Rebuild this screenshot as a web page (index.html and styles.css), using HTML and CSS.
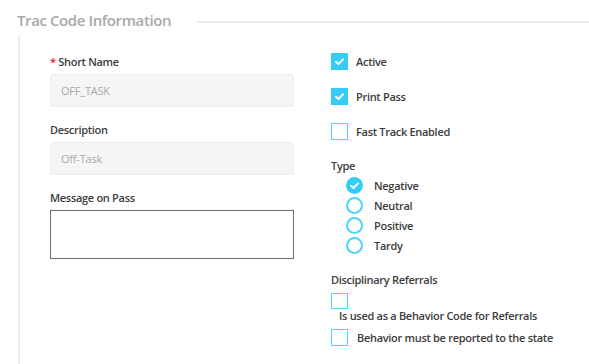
FILE: index.html
```html
<!DOCTYPE html>
<html lang="en">
<head>
  <meta charset="UTF-8" />
  <title>Trac Code Information</title>
  <link rel="stylesheet" href="styles.css">
</head>
<body>

  <div class="section-head">
    <div class="section-title">Trac Code Information</div>
    <div class="section-line"></div>
  </div>

  <div class="section-body">
    <div class="col-left">
      <div class="field">
        <div class="field-label"><span class="req">*</span> Short Name</div>
        <div class="field-input">OFF_TASK</div>
      </div>
      <div class="field">
        <div class="field-label">Description</div>
        <div class="field-input">Off-Task</div>
      </div>
      <div class="field">
        <div class="field-label">Message on Pass</div>
        <div class="field-textarea"></div>
      </div>
    </div>

    <div class="col-right">
      <div class="check-row">
        <svg class="box" viewBox="0 0 17 17" width="17" height="17"><rect width="17" height="17" fill="#35cdf6"/><path d="M5 8.8l2.4 2.2 4.6-4.6" fill="none" stroke="#fff" stroke-width="2" stroke-linecap="round" stroke-linejoin="round"/></svg>
        <span class="check-label">Active</span>
      </div>
      <div class="check-row">
        <svg class="box" viewBox="0 0 17 17" width="17" height="17"><rect width="17" height="17" fill="#35cdf6"/><path d="M5 8.8l2.4 2.2 4.6-4.6" fill="none" stroke="#fff" stroke-width="2" stroke-linecap="round" stroke-linejoin="round"/></svg>
        <span class="check-label">Print Pass</span>
      </div>
      <div class="check-row">
        <svg class="box" viewBox="0 0 17 17" width="17" height="17"><rect x="0.5" y="0.5" width="16" height="16" fill="#fff" stroke="#52d3f8"/></svg>
        <span class="check-label">Fast Track Enabled</span>
      </div>

      <div class="group-label type-label">Type</div>
      <div class="radio-list">
        <div class="radio-row">
          <span class="radio checked"><svg viewBox="0 0 17 17" width="17" height="17"><path d="M5 8.8l2.4 2.2 4.6-4.6" fill="none" stroke="#fff" stroke-width="2" stroke-linecap="round" stroke-linejoin="round"/></svg></span>
          <span class="check-label">Negative</span>
        </div>
        <div class="radio-row">
          <span class="radio"></span>
          <span class="check-label">Neutral</span>
        </div>
        <div class="radio-row">
          <span class="radio"></span>
          <span class="check-label">Positive</span>
        </div>
        <div class="radio-row">
          <span class="radio"></span>
          <span class="check-label">Tardy</span>
        </div>
      </div>

      <div class="group-label ref-label">Disciplinary Referrals</div>
      <svg class="box ref-box" viewBox="0 0 17 16" width="17" height="16"><rect x="0.5" y="0.5" width="16" height="15" fill="#fff" stroke="#52d3f8"/></svg>
      <div class="check-label ref-text">Is used as a Behavior Code for Referrals</div>
      <div class="check-row state-row">
        <svg class="box" viewBox="0 0 17 17" width="17" height="17"><rect x="0.5" y="0.5" width="16" height="16" fill="#fff" stroke="#52d3f8"/></svg>
        <span class="check-label">Behavior must be reported to the state</span>
      </div>
    </div>
  </div>

</body>
</html>
```

FILE: styles.css
```css
body {
  margin: 0;
  background: #fff;
  font-family: 'Open Sans', 'Liberation Sans', sans-serif;
  color: #3c3c3c;
  width: 589px;
  height: 364px;
  overflow: hidden;
}

.section-head {
  display: flex;
  align-items: flex-start;
  height: 35px;
  padding-left: 17px;
  box-sizing: border-box;
}

.section-title {
  font-size: 15px;
  font-weight: 600;
  color: #a8a8a8;
  letter-spacing: -0.4px;
  line-height: 20px;
  margin-top: 10px;
}

.section-line {
  flex: 1;
  height: 2px;
  background: #ececec;
  margin-left: 26px;
  margin-top: 21px;
}

.section-body {
  margin-left: 18px;
  border-left: 2px solid #eeeeee;
  height: 329px;
  display: flex;
  padding-left: 30px;
  padding-top: 18px;
  box-sizing: border-box;
}

.col-left {
  width: 244px;
  padding-top: 2px;
}

.col-right {
  margin-left: 37px;
  display: flex;
  flex-direction: column;
  align-items: flex-start;
}

.field {
  margin-bottom: 16px;
}

.field-label,
.group-label,
.check-label {
  font-size: 11px;
  font-weight: 600;
  line-height: 14px;
  letter-spacing: -0.3px;
  color: #3c3c3c;
}

.field-label {
  margin-bottom: 5px;
}

.req {
  color: #e02020;
}

.field-input {
  height: 33px;
  box-sizing: border-box;
  background: #f5f5f5;
  border: 1px solid #ececec;
  border-radius: 3px;
  padding: 0 10px;
  font-size: 11px;
  line-height: 31px;
  color: #a9a9a9;
  letter-spacing: -0.2px;
}

.field-textarea {
  height: 49px;
  box-sizing: border-box;
  border: 1px solid #6e6e6e;
  background: #fff;
}

.check-row {
  display: flex;
  align-items: flex-start;
  gap: 8px;
  height: 17px;
  margin-bottom: 18px;
}

.check-row .check-label {
  margin-top: 2px;
}

.box {
  display: block;
  flex-shrink: 0;
}

.type-label {
  margin-top: 1px;
}

.radio-list {
  margin-top: 4px;
  margin-left: 15px;
  display: flex;
  flex-direction: column;
  gap: 3px;
}

.radio-row {
  display: flex;
  align-items: center;
  gap: 11px;
  height: 17px;
}

.radio {
  width: 17px;
  height: 17px;
  box-sizing: border-box;
  border: 2px solid #4ed4f8;
  border-radius: 50%;
  display: block;
  flex-shrink: 0;
}

.radio.checked {
  background: #35cdf6;
  border-color: #35cdf6;
}

.radio svg {
  display: block;
  margin: -2px;
}

.ref-label {
  margin-top: 19px;
}

.ref-box {
  margin-top: 6px;
}

.ref-text {
  margin-left: 8px;
}

.state-row {
  margin-top: 6px;
  gap: 9px;
}
```
